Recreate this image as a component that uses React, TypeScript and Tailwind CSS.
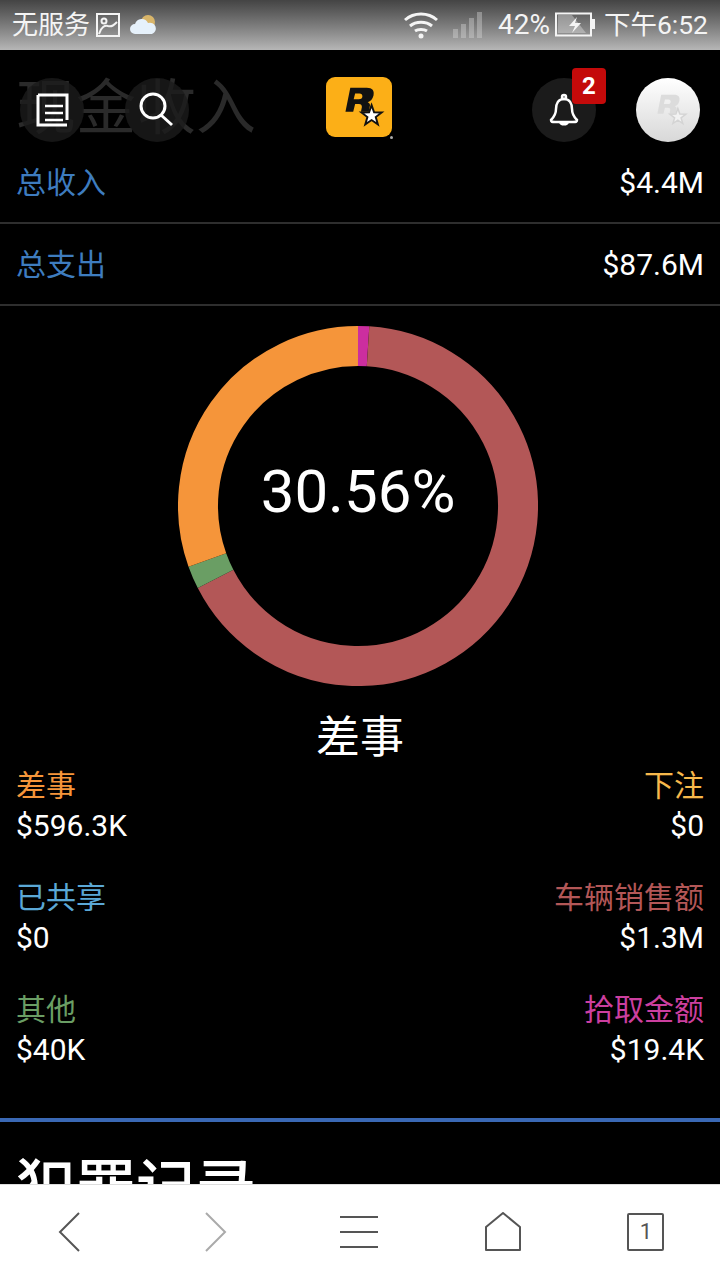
const cjk = "font-['Roboto','Noto_Sans_CJK_SC',sans-serif]";

const segments = [
  { color: "#cc2e9f", from: 0, to: 3.6 },
  { color: "#b35757", from: 3.6, to: 242.9 },
  { color: "#6a9e64", from: 242.9, to: 250.3 },
  { color: "#f5953a", from: 250.3, to: 360 },
];

function arc(from: number, to: number) {
  const r = 160;
  const c = 180;
  const pt = (a: number) => {
    const t = (a * Math.PI) / 180;
    return `${(c + r * Math.sin(t)).toFixed(2)} ${(c - r * Math.cos(t)).toFixed(2)}`;
  };
  return `M${pt(from)} A${r} ${r} 0 ${to - from > 180 ? 1 : 0} 1 ${pt(to)}`;
}

function RStar({ fill, star, stroke }: { fill: string; star: string; stroke: string }) {
  return (
    <svg viewBox="0 0 66 62" className="w-full h-full">
      <path
        d="M24 11h17c6 0 8 3 7 8-1 4-3 6-6 7 2 1 3 2 2 5l-1 5h-8l1-5c0-2-1-3-3-3h-4l-2 8h-8zM29 17l-1.500 6h5c3 0 4-1 4-3 0-2-1-3-3-3z"
        fill={fill}
        fillRule="evenodd"
      />
      <path
        d="M46 29L48.600 36.400 56.500 36.600 50.300 41.400 52.500 48.900 46 44.500 39.500 48.900 41.700 41.400 35.500 36.600 43.400 36.400z"
        fill={star}
        stroke={stroke}
        strokeWidth="2"
      />
    </svg>
  );
}

function StatusBar() {
  return (
    <div className="h-[50px] shrink-0 flex items-center justify-between pl-3 pr-3 bg-gradient-to-b from-[#444444] to-[#b6b6b6] text-[#f4f4f4] text-[26px]">
      <div className="flex items-center gap-[6px]">
        <span>无服务</span>
        <svg width="24" height="24" viewBox="0 0 24 24" fill="none" stroke="#f4f4f4" strokeWidth="2">
          <rect x="1" y="1" width="22" height="22" />
          <circle cx="8" cy="8" r="2.500" />
          <path d="M3 21c2-7 6-9 9-8 4 1 6-1 9-4" />
        </svg>
        <svg width="28" height="26" viewBox="0 0 28 26" className="ml-[4px]">
          <circle cx="18" cy="10" r="7" fill="#d8b56a" />
          <path d="M5 22a5 5 0 0 1 0-10 7 7 0 0 1 13-1 5.500 5.500 0 0 1 4 11z" fill="#e6f1fb" />
        </svg>
      </div>
      <div className="flex items-center">
        <svg width="36" height="28" viewBox="0 0 36 28" fill="none" stroke="#f4f4f4" strokeWidth="3">
          <path d="M2 9c9-8 23-8 32 0M7 15c6-5 16-5 22 0M12 20c3-2 9-2 12 0" />
          <circle cx="18" cy="25" r="2.500" fill="#f4f4f4" stroke="none" />
        </svg>
        <div className="flex items-end gap-[3px] h-[26px] ml-[14px]">
          <div className="w-[5px] h-[9px] bg-[#d8d8d8]/40" />
          <div className="w-[5px] h-[14px] bg-[#d8d8d8]/40" />
          <div className="w-[5px] h-[20px] bg-[#d8d8d8]/40" />
          <div className="w-[5px] h-[26px] bg-[#d8d8d8]/40" />
        </div>
        <span className="ml-[16px] text-[28px]">42%</span>
        <svg width="40" height="26" viewBox="0 0 40 26" className="ml-[5px]" fill="none">
          <rect x="1" y="1.500" width="35" height="22" stroke="#f4f4f4" strokeWidth="2" />
          <rect x="37" y="7" width="3" height="10" fill="#f4f4f4" />
          <path d="M3 3h14l14 18H3z" fill="#f4f4f4" fillOpacity="0.35" />
          <path d="M22 5l-8 9h6l-3 7 9-10h-6z" fill="#f4f4f4" />
        </svg>
        <span className="ml-[9px] text-[26.500px]">下午6:52</span>
      </div>
    </div>
  );
}

function Header() {
  return (
    <div className="absolute top-[28px] left-0 right-0 h-[64px] pl-[20px] pr-[20px] flex items-center">
      <div className="w-[64px] h-[64px] rounded-full bg-[#1b1b1b]/80 flex items-center justify-center">
        <svg width="34" height="34" viewBox="0 0 34 34" fill="none" stroke="white" strokeWidth="3">
          <path d="M3 2h29v25M3 2v30h29" />
          <path d="M10 13h18M10 20h18M10 27h18" strokeWidth="2.500" />
        </svg>
      </div>
      <div className="w-[64px] h-[64px] rounded-full bg-[#1b1b1b]/80 flex items-center justify-center ml-[41px]">
        <svg width="36" height="36" viewBox="0 0 36 36" fill="none" stroke="white" strokeWidth="3">
          <circle cx="14" cy="14" r="12" />
          <path d="M22 23l11 10" />
        </svg>
      </div>
      <div className="relative ml-[137px] w-[66px] h-[60px] rounded-[9px] bg-[#fcaf17] -mt-[7px]">
        <RStar fill="#111" star="#fff" stroke="#111" />
        <div className="absolute -right-[1px] -bottom-[2px] w-[3px] h-[3px] rounded-full bg-[#aaaaaa]" />
      </div>
      <div className="relative ml-auto w-[64px] h-[64px] rounded-full bg-[#1b1b1b] flex items-center justify-center">
        <svg width="34" height="34" viewBox="0 0 34 34" fill="none" stroke="white" strokeWidth="2.500">
          <circle cx="17" cy="4" r="2" />
          <path d="M17 6c-6 0-8 5-8 10 0 5-2 8-5 11 0 2 1 2 4 2h18c3 0 4 0 4-2-3-3-5-6-5-11 0-5-2-10-8-10zM13 29c1 3 7 3 8 0" />
        </svg>
        <span className="absolute -top-[10px] -right-[10px] w-[34px] h-[36px] rounded-[4px] bg-[#c40a0a] text-white text-[24px] font-bold flex items-center justify-center">
          2
        </span>
      </div>
      <div className="ml-[40px] w-[64px] h-[64px] rounded-full bg-gradient-to-b from-[#ffffff] to-[#d8d8d8] p-[7px]">
        <RStar fill="#dcdcdc" star="#f2f2f2" stroke="#d4d4d4" />
      </div>
    </div>
  );
}

function TotalRow({ label, value }: { label: string; value: string }) {
  return (
    <div className="h-[82px] flex items-center justify-between border-b-2 border-[#2e2e2e] px-[16px] text-[30px]">
      <span className="text-[#3e7cbf]">{label}</span>
      <span className="text-white">{value}</span>
    </div>
  );
}

function Legend({ label, value, color, right }: { label: string; value: string; color: string; right?: boolean }) {
  return (
    <div className={`h-[112px] text-[30px] leading-[40px] ${right ? "text-right" : "text-left"}`}>
      <div className={color}>{label}</div>
      <div className="text-white">{value}</div>
    </div>
  );
}

export default function App() {
  return (
    <div className={`w-[720px] h-[1280px] flex flex-col overflow-hidden bg-black ${cjk}`}>
      <StatusBar />
      <div className="relative flex-1 overflow-hidden">
        <div className="h-[92px] pl-[16px] pt-[24px] text-[60px] leading-[70px] text-[#2a2a2a]">现金收入</div>
        <TotalRow label="总收入" value="$4.4M" />
        <TotalRow label="总支出" value="$87.6M" />
        <div className="relative w-[360px] h-[360px] ml-[178px] mt-[20px]">
          <svg viewBox="0 0 360 360" className="w-full h-full">
            {segments.map((s) => (
              <path key={s.color} d={arc(s.from, s.to)} fill="none" stroke={s.color} strokeWidth="40" />
            ))}
          </svg>
          <div className="absolute left-0 right-0 top-[131px] text-center text-white text-[60px] leading-[70px]">
            30.56%
          </div>
        </div>
        <div className="text-center text-white text-[44px] leading-[60px] mt-[22px]">差事</div>
        <div className="grid grid-cols-2 px-[16px] -mt-[2px]">
          <Legend label="差事" value="$596.3K" color="text-[#f5953a]" />
          <Legend label="下注" value="$0" color="text-[#f7b84b]" right />
          <Legend label="已共享" value="$0" color="text-[#5ba8d6]" />
          <Legend label="车辆销售额" value="$1.3M" color="text-[#b35757]" right />
          <Legend label="其他" value="$40K" color="text-[#6a9e64]" />
          <Legend label="拾取金额" value="$19.4K" color="text-[#cc3f9f]" right />
        </div>
        <div className="h-[4px] bg-[#3a68b4] mt-[16px]" />
        <div className="pl-[16px] pt-[32px] text-[60px] leading-[70px] text-white font-medium">犯罪记录</div>
        <Header />
      </div>
      <div className="h-[96px] shrink-0 bg-white border-t border-[#dddddd] flex items-center pb-[2px]">
        <div className="flex-1 flex justify-center pr-[4px]">
          <svg width="24" height="40" viewBox="0 0 24 40" fill="none" stroke="#555" strokeWidth="2">
            <path d="M21 1L2 20l19 19" />
          </svg>
        </div>
        <div className="flex-1 flex justify-center pr-[4px]">
          <svg width="24" height="40" viewBox="0 0 24 40" fill="none" stroke="#aaa" strokeWidth="2">
            <path d="M3 1l19 19L3 39" />
          </svg>
        </div>
        <div className="flex-1 flex justify-center pr-[4px]">
          <svg width="38" height="32" viewBox="0 0 38 32" fill="none" stroke="#555" strokeWidth="2">
            <path d="M0 1h38M0 16h38M0 31h38" />
          </svg>
        </div>
        <div className="flex-1 flex justify-center pr-[2px]">
          <svg width="38" height="40" viewBox="0 0 38 40" fill="none" stroke="#555" strokeWidth="2">
            <path d="M19 1L2 15v23h34V15z" strokeLinejoin="round" />
          </svg>
        </div>
        <div className="flex-1 flex justify-center pr-[4px]">
          <div className="w-[37px] h-[38px] border-2 border-[#555] rounded-[2px] text-[#555] text-[22px] flex items-center justify-center">
            1
          </div>
        </div>
      </div>
    </div>
  );
}
